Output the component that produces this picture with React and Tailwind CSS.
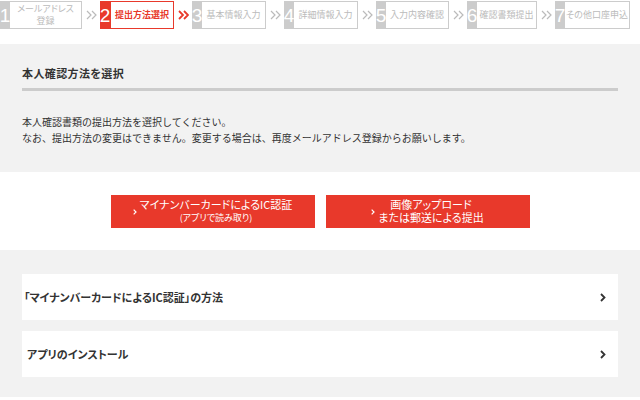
const FONT = "font-['Noto_Sans_CJK_JP','Noto_Sans',sans-serif]";

const steps = [
  { n: '1', label: ['メールアドレス', '登録'], w: 'w-[82px]' },
  { n: '2', label: ['提出方法選択'], w: 'w-[74px]', active: true },
  { n: '3', label: ['基本情報入力'], w: 'w-[74px]' },
  { n: '4', label: ['詳細情報入力'], w: 'w-[74px]' },
  { n: '5', label: ['入力内容確認'], w: 'w-[73px]' },
  { n: '6', label: ['確認書類提出'], w: 'w-[70px]' },
  { n: '7', label: ['その他口座申込'], w: 'w-[75px]' },
];

function Arrows({ active }) {
  return (
    <div className="w-[18px] h-full flex items-center justify-center">
      <svg width="11" height="10" viewBox="0 0 11 10" fill="none">
        <polyline
          points="1,1 5,5 1,9"
          stroke={active ? '#e8392b' : '#bbbbbb'}
          strokeWidth={active ? 1.8 : 1.2}
        />
        <polyline
          points="6,1 10,5 6,9"
          stroke={active ? '#e8392b' : '#bbbbbb'}
          strokeWidth={active ? 1.8 : 1.2}
        />
      </svg>
    </div>
  );
}

function Step({ step }) {
  return (
    <div className={`${step.w} h-full flex`}>
      <div
        className={`w-[10px] h-full flex items-center justify-center overflow-visible font-['Liberation_Sans',sans-serif] text-[19px] leading-none text-white ${
          step.active ? 'bg-[#e8392b]' : 'bg-[#cccccc]'
        }`}
      >
        {step.n}
      </div>
      <div
        className={`flex-1 h-full bg-white border flex flex-col items-center justify-center text-[9px] leading-[12px] ${
          step.active
            ? 'border-[#e8392b] text-[#e8392b] font-bold'
            : 'border-[#cccccc] border-l-0 text-[#bbbbbb]'
        }`}
      >
        {step.label.map((l) => (
          <span key={l}>{l}</span>
        ))}
      </div>
    </div>
  );
}

function Chevron({ className }) {
  return (
    <svg width="6" height="9" viewBox="0 0 6 9" fill="none" className={className}>
      <polyline points="1,1 4.5,4.5 1,8" stroke="currentColor" strokeWidth="1.8" />
    </svg>
  );
}

function RedButton({ lines, small }) {
  return (
    <button className="w-[204px] h-[33px] bg-[#e8392b] text-white flex items-center justify-center gap-[3px]">
      <Chevron className="w-[4px] h-[6px] mt-[2px]" />
      <div className="flex flex-col items-center">
        <span className="text-[11px] leading-[13px]">{lines[0]}</span>
        <span className={`${small ? 'text-[9px]' : 'text-[11px]'} leading-[13px]`}>{lines[1]}</span>
      </div>
    </button>
  );
}

function LinkCard({ label, pad }) {
  return (
    <div className={`h-[46px] bg-white flex items-center justify-between ${pad} pr-[12px]`}>
      <span className="text-[11px] font-bold text-[#333333]">{label}</span>
      <Chevron className="text-[#333333]" />
    </div>
  );
}

export default function App() {
  return (
    <div className={`w-[640px] h-[400px] bg-white overflow-hidden ${FONT} [font-feature-settings:'palt']`}>
      {/* Step bar */}
      <div className="h-[44px] pt-[1px]">
        <div className="h-[28px] flex">
          {steps.map((s, i) => (
            <div key={s.n} className="flex h-full">
              <Step step={s} />
              {i < steps.length - 1 && <Arrows active={s.active} />}
            </div>
          ))}
        </div>
      </div>

      {/* Intro */}
      <div className="bg-[#f2f2f2] h-[128px] px-[22px] pt-[21px]">
        <h2 className="text-[11px] font-bold text-[#333333] leading-[16px] tracking-[0.4px]">本人確認方法を選択</h2>
        <div className="h-[3px] bg-[#cccccc] mt-[7px]" />
        <div className="mt-[23px] text-[10px] leading-[16px] text-[#333333] [font-feature-settings:normal]">
          <p>本人確認書類の提出方法を選択してください。</p>
          <p>なお、提出方法の変更はできません。変更する場合は、再度メールアドレス登録からお願いします。</p>
        </div>
      </div>

      {/* Buttons */}
      <div className="h-[78px] flex items-center justify-center gap-[11px]">
        <RedButton lines={['マイナンバーカードによるIC認証', '(アプリで読み取り)']} small />
        <RedButton lines={['画像アップロード', 'または郵送による提出']} />
      </div>

      {/* Links */}
      <div className="bg-[#f2f2f2] h-[147px] px-[22px] pt-[24px] flex flex-col gap-[11px]">
        <LinkCard label="「マイナンバーカードによるIC認証」の方法" pad="pl-[2px]" />
        <LinkCard label="アプリのインストール" pad="pl-[5px]" />
      </div>
    </div>
  );
}
